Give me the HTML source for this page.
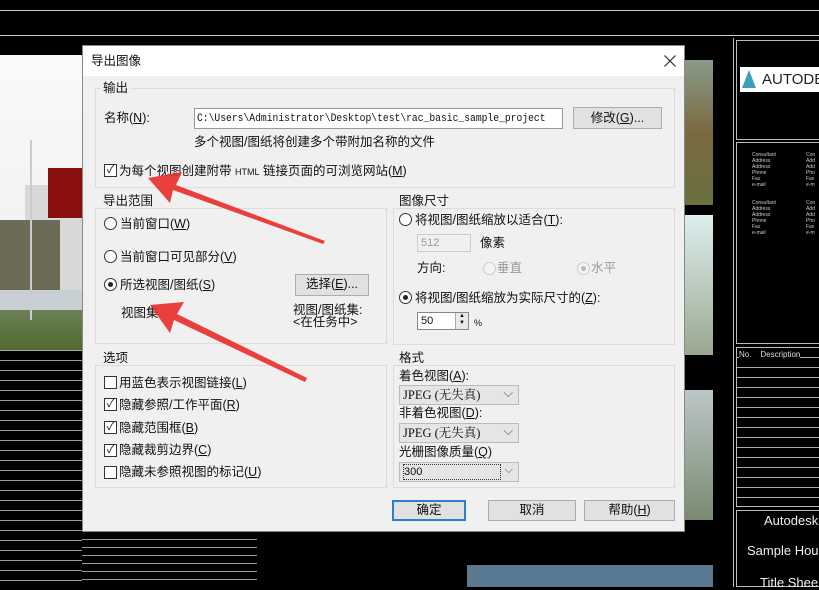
<!DOCTYPE html>
<html><head><meta charset="utf-8"><style>
*{margin:0;padding:0;box-sizing:border-box}
body{width:819px;height:587px;background:#000;position:relative;overflow:hidden;font-family:"Liberation Sans","Noto Sans CJK SC",sans-serif;font-size:12.5px;color:#111}
.a{position:absolute}
.t{position:absolute;white-space:nowrap;line-height:14px}
.grp{position:absolute;border:1px solid #dcdcdc;}
.lab{position:absolute;background:#f0f0f0;padding:0 2px;line-height:14px}
.cb{position:absolute;width:13px;height:13px;border:1px solid #333;background:#fff;font-size:11px;line-height:11px;text-align:center}
.rb{position:absolute;width:13px;height:13px;border:1px solid #333;border-radius:50%;background:#fff}
.rb.on::after{content:"";position:absolute;left:3px;top:3px;width:5px;height:5px;border-radius:50%;background:#222}
.btn{position:absolute;background:#e1e1e1;border:1px solid #adadad;text-align:center;line-height:19px}
.sel{position:absolute;background:#e5e5e5;border:1px solid #bbb;line-height:18px;padding-left:3px;font-family:"Liberation Serif","Noto Serif CJK SC",serif}
.sel::after{content:"⌵";position:absolute;right:5px;top:-2px;color:#555}
.w{position:absolute;background:#fff}
.wl{position:absolute;background:#ccc}
</style></head><body>
<div class="wl" style="left:0;top:10px;width:819px;height:1px"></div>
<div class="wl" style="left:0;top:35px;width:819px;height:1px"></div>
<div class="a" style="left:0;top:55px;width:82px;height:295px;background:linear-gradient(#fafafa 0,#f2f2f2 60%,#7a8a6a 80%,#4f6a30 100%)"></div>
<div class="a" style="left:25px;top:185px;width:57px;height:110px;background:#d8d8d8"></div>
<div class="a" style="left:48px;top:168px;width:34px;height:50px;background:#8a1010"></div>
<div class="a" style="left:0;top:220px;width:60px;height:90px;background:#6e6a58"></div>
<div class="a" style="left:0;top:290px;width:82px;height:20px;background:#c8d0d4"></div>
<div class="a" style="left:30px;top:140px;width:2px;height:180px;background:#ccc"></div>
<div class="a" style="left:0;top:350px;width:82px;height:237px;background:#000;border-top:1px solid #aaa;background-image:repeating-linear-gradient(#000 0,#000 9px,#999 9px,#999 10px)"></div>
<div class="a" style="left:82px;top:532px;width:175px;height:55px;background-image:repeating-linear-gradient(#000 0,#000 7px,#999 7px,#999 8px)"></div>
<div class="a" style="left:685px;top:60px;width:28px;height:145px;background:linear-gradient(#8a9a8a,#7a6a40 50%,#6a7040)"></div>
<div class="a" style="left:685px;top:215px;width:28px;height:140px;background:linear-gradient(#ddeeee,#9aa890)"></div>
<div class="a" style="left:685px;top:390px;width:28px;height:130px;background:linear-gradient(#bcc6c8,#7a8a70)"></div>
<div class="a" style="left:467px;top:565px;width:246px;height:22px;background:#5a7890"></div>
<div class="a" style="left:733px;top:38px;width:86px;height:549px;border-left:1px solid #bbb"></div>
<div class="a" style="left:736px;top:40px;width:83px;height:100px;border:1px solid #bbb;border-right:0"></div>
<div class="a" style="left:740px;top:67px;width:79px;height:25px;background:#fff;font-size:15px;line-height:25px;padding-left:22px;color:#222">AUTODESK</div>
<div class="a" style="left:742px;top:70px;width:0;height:0;border-left:7px solid transparent;border-right:7px solid transparent;border-bottom:18px solid #3aa0b8"></div>
<div class="a" style="left:736px;top:142px;width:83px;height:202px;border:1px solid #bbb;border-right:0"></div>
<div class="t" style="left:752px;top:152px;font-size:5px;line-height:6px;color:#ccc">Consultant<br>Address<br>Address<br>Phone<br>Fax<br>e-mail<br><br><br>Consultant<br>Address<br>Address<br>Phone<br>Fax<br>e-mail</div>
<div class="t" style="left:806px;top:152px;font-size:5px;line-height:6px;color:#ccc">Con<br>Add<br>Add<br>Pho<br>Fax<br>e-m<br><br><br>Con<br>Add<br>Add<br>Pho<br>Fax<br>e-m</div>
<div class="a" style="left:736px;top:347px;width:83px;height:160px;border:1px solid #bbb;border-right:0;background-image:repeating-linear-gradient(#000 0,#000 9px,#aaa 9px,#aaa 10px)"></div>
<div class="t" style="left:739px;top:348px;font-size:8px;color:#ddd;background:#000">No. &nbsp; &nbsp;Description</div>
<div class="a" style="left:736px;top:510px;width:83px;height:77px;border:1px solid #bbb;border-right:0"></div>
<div class="t" style="left:764px;top:514px;font-size:13px;color:#eee">Autodesk</div>
<div class="t" style="left:747px;top:544px;font-size:13px;color:#eee">Sample Hou</div>
<div class="t" style="left:760px;top:576px;font-size:13px;color:#eee">Title Shee</div>

<div class="a" style="left:82px;top:45px;width:603px;height:487px;background:#f0f0f0;border:1px solid #888"></div>
<div class="a" style="left:83px;top:46px;width:601px;height:30px;background:#fff"></div>
<div class="t" style="left:91px;top:54px;font-size:12.5px">导出图像</div>
<svg class="a" style="left:664px;top:55px" width="12" height="12"><path d="M0.5 0.5L11.5 11.5M11.5 0.5L0.5 11.5" stroke="#222" stroke-width="1.1"/></svg>

<div class="grp" style="left:95px;top:88px;width:580px;height:100px"></div>
<div class="lab" style="left:101px;top:81px">输出</div>
<div class="t" style="left:104px;top:111px">名称(<u>N</u>):</div>
<div class="w" style="left:194px;top:108px;width:369px;height:21px;border:1px solid #999"></div>
<div class="t" style="left:197px;top:112px;font-family:'Liberation Mono',monospace;font-size:11px;transform:scaleX(0.88);transform-origin:left">C:\Users\Administrator\Desktop\test\rac_basic_sample_project</div>
<div class="btn" style="left:573px;top:107px;width:89px;height:22px;line-height:20px">修改(<u>G</u>)...</div>
<div class="t" style="left:194px;top:135px">多个视图/图纸将创建多个带附加名称的文件</div>
<div class="cb" style="left:104px;top:164px">✓</div>
<div class="t" style="left:119px;top:164px">为每个视图创建附带 <span style="font-size:9px">HTML</span> 链接页面的可浏览网站(<u>M</u>)</div>

<div class="grp" style="left:95px;top:208px;width:292px;height:136px"></div>
<div class="lab" style="left:101px;top:194px">导出范围</div>
<div class="rb" style="left:104px;top:217px"></div><div class="t" style="left:120px;top:217px">当前窗口(<u>W</u>)</div>
<div class="rb" style="left:104px;top:250px"></div><div class="t" style="left:120px;top:250px">当前窗口可见部分(<u>V</u>)</div>
<div class="rb on" style="left:104px;top:278px"></div><div class="t" style="left:120px;top:278px">所选视图/图纸(<u>S</u>)</div>
<div class="btn" style="left:295px;top:274px;width:74px;height:22px">选择(<u>E</u>)...</div>
<div class="t" style="left:121px;top:306px">视图集</div>
<div class="t" style="left:293px;top:304px;line-height:12px">视图/图纸集:<br>&lt;在任务中&gt;</div>

<div class="grp" style="left:393px;top:208px;width:282px;height:137px"></div>
<div class="lab" style="left:397px;top:194px">图像尺寸</div>
<div class="rb" style="left:399px;top:213px"></div><div class="t" style="left:415px;top:213px">将视图/图纸缩放以适合(<u>T</u>):</div>
<div class="a" style="left:417px;top:234px;width:54px;height:18px;border:1px solid #ccc;background:#f0f0f0;color:#999;font-size:11px;line-height:16px;padding-left:3px">512</div>
<div class="t" style="left:480px;top:236px">像素</div>
<div class="t" style="left:417px;top:261px">方向:</div>
<div class="rb" style="left:483px;top:262px;border-color:#ccc;background:#f4f4f4"></div><div class="t" style="left:497px;top:261px;color:#999">垂直</div>
<div class="rb" style="left:577px;top:262px;border-color:#ccc;background:#f4f4f4"><div style="position:absolute;left:3px;top:3px;width:5px;height:5px;border-radius:50%;background:#bbb"></div></div><div class="t" style="left:591px;top:261px;color:#999">水平</div>
<div class="rb on" style="left:399px;top:291px"></div><div class="t" style="left:415px;top:291px">将视图/图纸缩放为实际尺寸的(<u>Z</u>):</div>
<div class="w" style="left:417px;top:312px;width:52px;height:18px;border:1px solid #888;font-size:11px;line-height:16px;padding-left:3px">50</div>
<div class="a" style="left:455px;top:313px;width:13px;height:16px;background:#e8e8e8;border-left:1px solid #aaa;font-size:6px;line-height:7px;text-align:center">▲<br>▼</div>
<div class="t" style="left:474px;top:316px;font-size:9px">%</div>

<div class="grp" style="left:95px;top:365px;width:292px;height:123px"></div>
<div class="lab" style="left:101px;top:351px">选项</div>
<div class="cb" style="left:104px;top:376px"></div><div class="t" style="left:119px;top:376px">用蓝色表示视图链接(<u>L</u>)</div>
<div class="cb" style="left:104px;top:398px">✓</div><div class="t" style="left:119px;top:398px">隐藏参照/工作平面(<u>R</u>)</div>
<div class="cb" style="left:104px;top:421px">✓</div><div class="t" style="left:119px;top:421px">隐藏范围框(<u>B</u>)</div>
<div class="cb" style="left:104px;top:444px">✓</div><div class="t" style="left:119px;top:443px">隐藏裁剪边界(<u>C</u>)</div>
<div class="cb" style="left:104px;top:466px"></div><div class="t" style="left:119px;top:465px">隐藏未参照视图的标记(<u>U</u>)</div>

<div class="grp" style="left:393px;top:365px;width:282px;height:123px"></div>
<div class="lab" style="left:397px;top:351px">格式</div>
<div class="t" style="left:399px;top:369px">着色视图(<u>A</u>):</div>
<div class="sel" style="left:399px;top:385px;width:120px;height:20px">JPEG (无失真)</div>
<div class="t" style="left:399px;top:406px">非着色视图(<u>D</u>):</div>
<div class="sel" style="left:399px;top:423px;width:120px;height:20px">JPEG (无失真)</div>
<div class="t" style="left:399px;top:445px">光栅图像质量(<u>Q</u>)</div>
<div class="sel" style="left:399px;top:462px;width:120px;height:20px;font-family:'Liberation Sans',sans-serif;font-size:11px"><span style="border:1px dotted #333;display:inline-block;width:98px;line-height:14px">300</span></div>

<div class="btn" style="left:392px;top:500px;width:74px;height:21px;border:2px solid #2d7fc9;line-height:17px">确定</div>
<div class="btn" style="left:488px;top:500px;width:88px;height:21px">取消</div>
<div class="btn" style="left:584px;top:500px;width:91px;height:21px">帮助(<u>H</u>)</div>

<svg class="a" style="left:0;top:0" width="819" height="587">
<polygon points="148,178 182,172 176,185 325,241 323,244 173,190 170,203" fill="#e8312e" opacity=".92"/>
<polygon points="150,305 184,302 177,314 307,378 305,382 174,320 170,333" fill="#e8312e" opacity=".92"/>
</svg>
</body></html>
